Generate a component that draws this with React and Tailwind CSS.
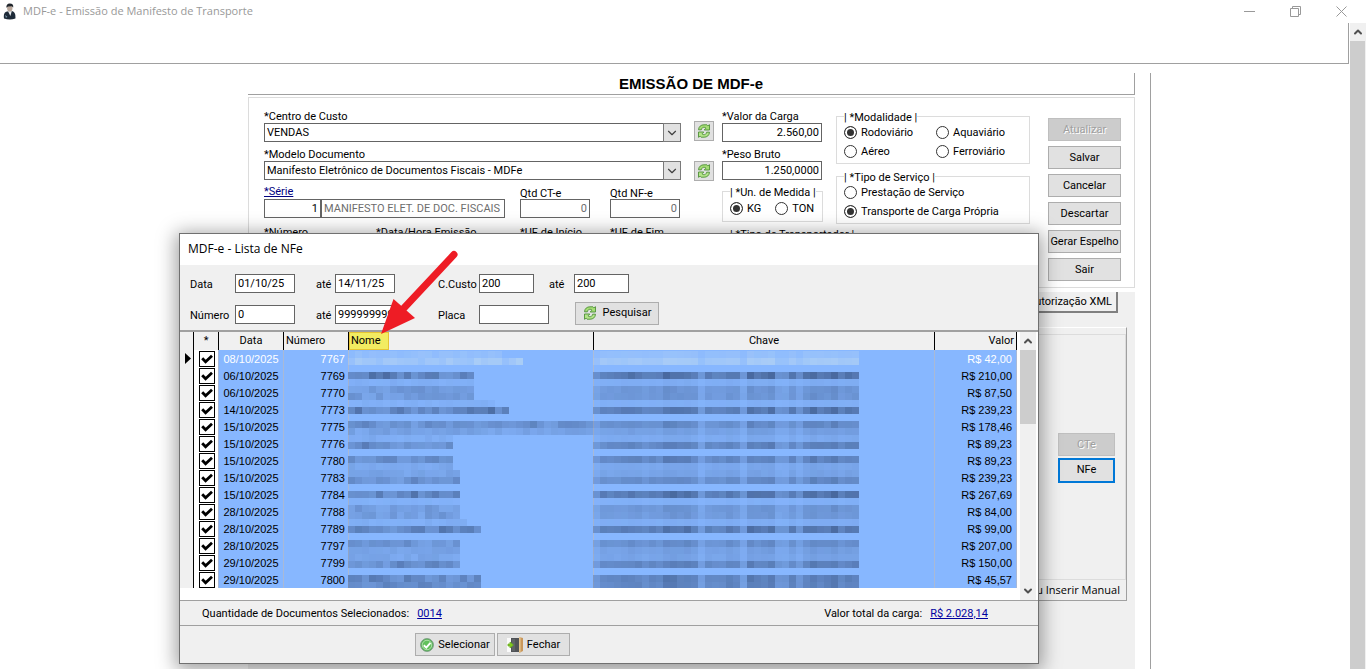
import { ChevronDown, ChevronUp } from 'lucide-react';

const NOTAS = [
  { data: '08/10/2025', numero: '7767', valor: 'R$ 42,00' },
  { data: '06/10/2025', numero: '7769', valor: 'R$ 210,00' },
  { data: '06/10/2025', numero: '7770', valor: 'R$ 87,50' },
  { data: '14/10/2025', numero: '7773', valor: 'R$ 239,23' },
  { data: '15/10/2025', numero: '7775', valor: 'R$ 178,46' },
  { data: '15/10/2025', numero: '7776', valor: 'R$ 89,23' },
  { data: '15/10/2025', numero: '7780', valor: 'R$ 89,23' },
  { data: '15/10/2025', numero: '7783', valor: 'R$ 239,23' },
  { data: '15/10/2025', numero: '7784', valor: 'R$ 267,69' },
  { data: '28/10/2025', numero: '7788', valor: 'R$ 84,00' },
  { data: '28/10/2025', numero: '7789', valor: 'R$ 99,00' },
  { data: '28/10/2025', numero: '7797', valor: 'R$ 207,00' },
  { data: '29/10/2025', numero: '7799', valor: 'R$ 150,00' },
  { data: '29/10/2025', numero: '7800', valor: 'R$ 45,57' }
];

// Mosaic that hides names and keys: strength of each 7px line, and how many
// cells the name takes on that line
const LINES = [
  [30, 22], [60, 25], [0, 0], [95, 18], [15, 18], [50, 18], [50, 18], [12, 21],
  [90, 23], [0, 0], [65, 35], [35, 35], [20, 15], [75, 15], [0, 0], [75, 15],
  [25, 15], [30, 16], [65, 16], [0, 0], [95, 16], [10, 16], [50, 16], [45, 16],
  [15, 17], [90, 19], [0, 0], [60, 16], [35, 16], [30, 16], [75, 16], [0, 0],
  [80, 19], [75, 19]
];

const KEY_CELLS = [
  60, 85, 85, 85, 90, 100, 95, 80, 90, 85, 110, 110, 100, 110, 95, 50, 85, 85, 85,
  100, 90, 50, 110, 100, 100, 110, 60, 60, 95, 60, 100, 115, 100, 100, 115, 90, 100, 100
];

const noise = (a, b) => {
  const n = Math.sin(a * 12.9898 + b * 78.233) * 43758.5453;
  return n - Math.floor(n);
};

function Mosaic({ columns }) {
  return (
    <svg
      className="absolute -left-px top-px z-10 pointer-events-none"
      width={columns * 7}
      height="237"
      shapeRendering="crispEdges"
      aria-hidden="true"
    >
      {LINES.map(([strength, nameCells], line) =>
        Array.from({ length: columns }, (_, col) => {
          const isKey = columns === 38;
          if (!isKey && col >= nameCells) return null;
          const base = isKey ? KEY_CELLS[col] : 50 + noise(col, line) * 60;
          const jitter = 0.9 + noise(line, col + 7) * 0.2;
          return (
            <rect
              key={`${line}-${col}`}
              x={col * 7}
              y={line * 7}
              width="7"
              height="7"
              fill={line < 2 ? '#c2dcf0' : '#46659a'}
              opacity={(strength * base * jitter) / 12000}
            />
          );
        })
      )}
    </svg>
  );
}

function RefreshIcon() {
  return (
    <svg width="14" height="14" viewBox="0 0 14 14" aria-hidden="true">
      <path
        d="M1.5 5.8C1.7 2.5 4 .8 6.9.8h3l1 1L12.5.7V6H7.2L9 4.2 7.8 3.4C6 3 4.6 4 4.3 5.8z"
        fill="#a4dd74"
        stroke="#4f9039"
        strokeWidth=".9"
      />
      <path
        d="M12.5 8.2C12.3 11.5 10 13.2 7.1 13.2h-3l-1-1L1.5 13.3V8h5.3L5 9.8l1.2.8C8 11 9.4 10 9.7 8.2z"
        fill="#b3e488"
        stroke="#4f9039"
        strokeWidth=".9"
      />
    </svg>
  );
}

function CheckIcon() {
  return (
    <svg width="14" height="14" viewBox="0 0 14 14" aria-hidden="true">
      <circle cx="7" cy="7" r="6.4" fill="#4cae4c" stroke="#7f9f86" />
      <circle cx="7" cy="7" r="4.8" fill="#62c15c" stroke="#b5e3ae" />
      <path d="M3.8 7.2 6.3 9.6 10.4 4.8" fill="none" stroke="#fff" strokeWidth="1.9" />
    </svg>
  );
}

function DoorIcon() {
  return (
    <svg width="16" height="16" viewBox="0 0 16 16" aria-hidden="true">
      <path d="M0 1h4v14H0z" fill="#fafafa" />
      <path d="M4 1h8v14H4z" fill="#505357" />
      <path d="M5 2h3v12H5z" fill="#5f6366" />
      <path d="M12 0l4 1v13l-4 2z" fill="#c9975b" />
      <path d="M12 0h1.6v15.2L12 16z" fill="#e5c48f" />
      <path d="M1 7h2V5l3.400 3L3 11V9H1z" fill="#82c81e" stroke="#6aad22" strokeWidth=".8" />
    </svg>
  );
}

function PersonIcon() {
  return (
    <svg width="14" height="17" viewBox="0 0 14 17" aria-hidden="true">
      <path d="M1 15.5Q0 9.5 4 8.5L9 8q4 1 3.4 7.5Q7 17.5 1 15.5z" fill="#1d2a38" />
      <path d="M5 8.2 7.4 13 8.8 8z" fill="#e9edf0" />
      <ellipse cx="6.8" cy="5" rx="2.7" ry="3.6" fill="#b9a79b" />
      <path d="M3.4 4.8Q3 .6 6.8.4q4 0 3.4 4.2L8.8 3.2 5 3.4z" fill="#20262c" />
      <path d="m2 12 2.4 1.4L3 15z" fill="#7690a3" />
    </svg>
  );
}

function Combo({ id, label, value }) {
  return (
    <div className="mb-1">
      <label htmlFor={id} className="block h-[15px] leading-[17px]">{label}</label>
      <div className="relative">
        <select
          id={id}
          className="block w-full h-[19px] appearance-none border border-[#646464] bg-white pl-0.5 leading-[17px]"
        >
          <option>{value}</option>
        </select>
        <span className="absolute right-0 top-0 flex h-[19px] w-[18px] items-center justify-center border border-[#7a7a7a] bg-[#e1e1e1] pointer-events-none">
          <ChevronDown size={14} strokeWidth={2} className="text-[#404040]" />
        </span>
      </div>
    </div>
  );
}

function Amount({ id, label, value }) {
  return (
    <div className="mb-1">
      <label htmlFor={id} className="block h-[15px] leading-[17px]">{label}</label>
      <input
        id={id}
        defaultValue={value}
        className="block h-[19px] w-[100px] border border-[#646464] bg-white px-0.5 text-right"
      />
    </div>
  );
}

function Count({ id, label }) {
  return (
    <div className="w-[70px]">
      <label htmlFor={id} className="block h-[15px] leading-[19px]">{label}</label>
      <input
        id={id}
        defaultValue="0"
        readOnly
        className="block h-[19px] w-full border border-[#646464] bg-white px-0.5 text-right text-[#6d6d6d]"
      />
    </div>
  );
}

function Radio({ name, label, checked }) {
  return (
    <label className="flex h-[19px] items-center gap-1 whitespace-nowrap">
      <input
        type="radio"
        name={name}
        defaultChecked={checked}
        className="size-[13px] shrink-0 appearance-none rounded-full border border-[#333] bg-white checked:bg-[#333] checked:shadow-[inset_0_0_0_2px_#fff]"
      />
      <span className="pt-0.5">{label}</span>
    </label>
  );
}

function Group({ legend, className, children }) {
  return (
    <fieldset className={`min-w-0 border border-[#dcdcdc] pl-[7px] ${className}`}>
      <legend className="h-[15px] whitespace-nowrap leading-[17px]">{legend}</legend>
      {children}
    </fieldset>
  );
}

function SideButton({ children, disabled }) {
  return (
    <button
      type="button"
      disabled={disabled}
      className="h-[23px] w-full whitespace-nowrap border border-[#adadad] bg-[#e1e1e1] pt-0.5 disabled:border-[#bfbfbf] disabled:bg-[#ccc] disabled:text-[#a0a0a0] disabled:[text-shadow:1px_1px_0_#fff]"
    >
      {children}
    </button>
  );
}

function RefreshButton({ label }) {
  return (
    <button
      type="button"
      aria-label={label}
      className="flex size-5 items-center justify-center border border-[#adadad] bg-[#e1e1e1]"
    >
      <RefreshIcon />
    </button>
  );
}

function FilterInput({ label, value, labelClass, inputClass }) {
  return (
    <label className="flex items-center">
      <span className={`pt-[3px] ${labelClass}`}>{label}</span>
      <input
        defaultValue={value}
        className={`h-[19px] border border-[#646464] bg-white px-0.5 ${inputClass}`}
      />
    </label>
  );
}

function ManifestForm() {
  return (
    <section className="mt-0.5 flex border border-[#dcdcdc] pl-[15px] pr-[13px]">
      <div className="min-w-0 flex-1 pt-2.5">
        <Combo id="centro" label="*Centro de Custo" value="VENDAS" />
        <Combo
          id="modelo"
          label="*Modelo Documento"
          value="Manifesto Eletrônico de Documentos Fiscais - MDFe"
        />
        <div className="flex">
          <div className="mr-[15px] min-w-0 flex-1">
            <a href="#serie" className="block h-[15px] leading-[15px] text-[#000080] underline">*Série</a>
            <div className="flex">
              <input
                aria-label="Série"
                defaultValue="1"
                className="h-[19px] w-[57px] border border-[#646464] bg-white px-0.5 text-right"
              />
              <input
                aria-label="Descrição da série"
                readOnly
                defaultValue="MANIFESTO ELET. DE DOC. FISCAIS"
                className="h-[19px] min-w-0 flex-1 border border-[#646464] bg-white px-0.5 text-[#6d6d6d]"
              />
            </div>
          </div>
          <Count id="qtd-cte" label="Qtd CT-e" />
          <div className="w-5" />
          <Count id="qtd-nfe" label="Qtd NF-e" />
          <div className="w-px" />
        </div>
        <div className="mt-1.5 flex h-[15px] leading-[17px]">
          <span className="w-28">*Número</span>
          <span className="flex-1">*Data/Hora Emissão</span>
          <span className="w-[90px]">*UF de Início</span>
          <span className="w-[71px]">*UF de Fim</span>
        </div>
      </div>

      <div className="ml-[13px] flex flex-col gap-5 pt-[23px]">
        <RefreshButton label="Atualizar centro de custo" />
        <RefreshButton label="Atualizar modelo" />
      </div>

      <div className="ml-2 w-[101px] pt-2.5">
        <Amount id="valor-carga" label="*Valor da Carga" value="2.560,00" />
        <Amount id="peso" label="*Peso Bruto" value="1.250,0000" />
        <Group legend="| *Un. de Medida |" className="mt-[3px] h-[38px]">
          <div className="flex gap-3.5">
            <Radio name="unidade" label="KG" checked />
            <Radio name="unidade" label="TON" />
          </div>
        </Group>
        <div className="mt-1 ml-2 h-[15px] whitespace-nowrap leading-[17px]">
          | *Tipo de Transportador |
        </div>
      </div>

      <div className="ml-[13px] w-[194px] pt-[11px]">
        <Group legend="| *Modalidade |" className="h-[55px]">
          <div className="-mt-px grid grid-cols-[92px_1fr]">
            <Radio name="modalidade" label="Rodoviário" checked />
            <Radio name="modalidade" label="Aquaviário" />
            <Radio name="modalidade" label="Aéreo" />
            <Radio name="modalidade" label="Ferroviário" />
          </div>
        </Group>
        <Group legend="| *Tipo de Serviço |" className="mt-[5px] h-[55px]">
          <div className="-mt-px">
            <Radio name="servico" label="Prestação de Serviço" />
            <Radio name="servico" label="Transporte de Carga Própria" checked />
          </div>
        </Group>
      </div>

      <div className="ml-[18px] flex w-[73px] flex-col gap-[5px] pt-5 pb-1.5">
        <SideButton disabled>Atualizar</SideButton>
        <SideButton>Salvar</SideButton>
        <SideButton>Cancelar</SideButton>
        <SideButton>Descartar</SideButton>
        <SideButton>Gerar Espelho</SideButton>
        <SideButton>Sair</SideButton>
      </div>
    </section>
  );
}

function DocumentsPanel() {
  return (
    <section className="mt-1 flex-1 bg-[#f0f0f0]">
      <div className="flex justify-end pr-[17px]">
        <button
          type="button"
          className="h-[21px] border-r-2 border-b-2 border-[#808080] px-1 pt-px leading-[18px]"
        >
          Autorização XML
        </button>
      </div>
      <div className="mt-3.5 mr-2 flex h-[274px] flex-col border-t border-r border-b border-t-white border-r-[#a0a0a0] border-b-[#a0a0a0] pt-1.5">
        <div className="flex flex-1 border-t border-r border-b border-[#dcdcdc]">
          <div className="mt-[52px] mb-2 flex-1 border border-black" />
          <div className="ml-5 mr-2.5 flex w-[57px] flex-col gap-0.5 pt-[98px]">
            <SideButton disabled>CTe</SideButton>
            <button type="button" className="h-[25px] border-2 border-[#0078d7] bg-[#e1e1e1]">
              NFe
            </button>
          </div>
        </div>
        <div className="h-5 pr-1.5 text-right font-['Open_Sans',sans-serif] text-[11px] leading-5">
          ou Inserir Manual
        </div>
      </div>
    </section>
  );
}

function NotasTable() {
  const head = 'h-[18px] border-r border-black p-0 font-normal leading-[18px]';
  const cell = 'h-[17px] border-r border-[#a9b9d6] p-0';
  return (
    <div className="flex h-[268px] bg-white">
      <div className="min-w-0 flex-1">
        <table className="w-full table-fixed border-separate border-spacing-0">
          <colgroup>
            <col className="w-3.5" />
            <col className="w-[25px]" />
            <col className="w-[65px]" />
            <col className="w-[65px]" />
            <col className="w-[245px]" />
            <col />
            <col className="w-[82px]" />
          </colgroup>
          <thead className="bg-[#f0f0f0]">
            <tr>
              <th className={head} aria-label="Registro atual" />
              <th className={head}>*</th>
              <th className={head}>Data</th>
              <th className={`${head} pl-0.5 text-left`}>Número</th>
              <th className={`${head} text-left`}>
                <span className="block h-[18px] w-10 border border-[#e6c433] bg-[#f2ec61] pl-px leading-4">
                  Nome
                </span>
              </th>
              <th className={head}>Chave</th>
              <th className={`${head} pr-0.5 text-right`}>Valor</th>
            </tr>
          </thead>
          <tbody className="font-['Liberation_Sans',Arial,sans-serif]">
            {NOTAS.map((nota, i) => (
              <tr key={nota.numero} className={`bg-[#87b7ff] ${i === 0 ? 'text-white' : 'text-black'}`}>
                <td className="h-[17px] border-r border-black bg-[#f0f0f0] p-0">
                  {i === 0 && (
                    <svg width="13" height="13" viewBox="0 0 13 13" aria-hidden="true">
                      <path d="M5 1v11l6-5.5z" fill="#000" />
                    </svg>
                  )}
                </td>
                <td className={`${cell} bg-white`}>
                  <div className="relative mt-px ml-[5px] size-4">
                    <input
                      type="checkbox"
                      defaultChecked
                      aria-label={`Selecionar ${nota.numero}`}
                      className="peer block size-4 appearance-none border border-black bg-white"
                    />
                    <svg
                      className="absolute inset-0 hidden pointer-events-none peer-checked:block"
                      viewBox="0 0 16 16"
                      aria-hidden="true"
                    >
                      <path d="M3.2 7.2 6.6 10.8 13 4.8" fill="none" stroke="#000" strokeWidth="2.8" />
                    </svg>
                  </div>
                </td>
                <td className={`${cell} text-center leading-4`}>{nota.data}</td>
                <td className={`${cell} pr-[3px] text-right leading-4`}>{nota.numero}</td>
                <td className={`${cell} relative`}>{i === 0 && <Mosaic columns={35} />}</td>
                <td className={`${cell} relative`}>{i === 0 && <Mosaic columns={38} />}</td>
                <td className={`${cell} pr-1 text-right leading-4`}>{nota.valor}</td>
              </tr>
            ))}
          </tbody>
        </table>
      </div>
      <div className="mr-0.5 ml-[3px] flex w-4 flex-col bg-[#f0f0f0]">
        <span className="flex h-[18px] items-center justify-center">
          <ChevronUp size={12} strokeWidth={4} className="text-[#505050]" />
        </span>
        <span className="h-[74px] bg-[#cdcdcd]" />
        <span className="flex-1" />
        <span className="flex h-[18px] items-center justify-center">
          <ChevronDown size={12} strokeWidth={4} className="text-[#505050]" />
        </span>
      </div>
    </div>
  );
}

function NfeDialog() {
  return (
    <div
      role="dialog"
      aria-label="MDF-e - Lista de NFe"
      className="absolute top-[233px] right-[327px] left-[179px] z-20 border border-[#707070] bg-[#f0f0f0] shadow-[0_3px_18px_3px_rgba(0,0,0,0.38)]"
    >
      <h2 className="h-[31px] bg-white pl-2 font-['Open_Sans',sans-serif] text-[12px] leading-[30px]">
        MDF-e - Lista de NFe
      </h2>

      <div className="h-[67px] border-b-2 border-[#a0a0a0] pt-[9px] pl-2.5">
        <div className="flex">
          <FilterInput label="Data" value="01/10/25" labelClass="w-[45px]" inputClass="w-[60px]" />
          <FilterInput label="até" value="14/11/25" labelClass="w-10 pl-[21px]" inputClass="w-[60px]" />
          <FilterInput label="C.Custo" value="200" labelClass="w-[84px] pl-[43px]" inputClass="w-[55px]" />
          <FilterInput label="até" value="200" labelClass="w-10 pl-[15px]" inputClass="w-[55px]" />
        </div>
        <div className="mt-2 flex items-end">
          <FilterInput label="Número" value="0" labelClass="w-[45px]" inputClass="w-[60px]" />
          <FilterInput label="até" value="999999999" labelClass="w-10 pl-[21px]" inputClass="w-[60px]" />
          <FilterInput label="Placa" value="" labelClass="w-[84px] pl-[43px]" inputClass="w-[70px]" />
          <button
            type="button"
            className="ml-[26px] flex h-[23px] w-[84px] items-center justify-center gap-1.5 border border-[#adadad] bg-[#e1e1e1]"
          >
            <RefreshIcon />
            Pesquisar
          </button>
        </div>
      </div>

      <NotasTable />

      <div className="flex h-[26px] items-center border-y border-[#a0a0a0] pt-0.5 pr-[50px] pl-[22px]">
        <span>Quantidade de Documentos Selecionados:</span>
        <a href="#selecionados" className="ml-2 text-[#0000a0] underline">0014</a>
        <span className="ml-auto">Valor total da carga:</span>
        <a href="#total" className="ml-2 text-[#0000a0] underline">R$ 2.028,14</a>
      </div>

      <div className="flex gap-0.5 py-[7px] pl-[235px]">
        <button
          type="button"
          className="flex h-[23px] w-20 items-center justify-center gap-1 border border-[#adadad] bg-[#e1e1e1]"
        >
          <CheckIcon />
          <span className="pt-0.5">Selecionar</span>
        </button>
        <button
          type="button"
          className="flex h-[23px] w-[73px] items-center justify-center gap-1 border border-[#adadad] bg-[#e1e1e1]"
        >
          <DoorIcon />
          <span className="pt-0.5">Fechar</span>
        </button>
      </div>

      {/* Arrow pointing at the Nome column */}
      <svg
        className="absolute top-4 left-[198px] pointer-events-none"
        width="84"
        height="86"
        viewBox="0 0 84 86"
        aria-hidden="true"
      >
        <path d="M76 4.5 26 58" stroke="#ee1c25" strokeWidth="7" strokeLinecap="round" />
        <path d="M3 84 15.5 49 37 68z" fill="#ee1c25" />
      </svg>
    </div>
  );
}

export default function App() {
  return (
    <div className="relative flex h-screen flex-col overflow-hidden bg-white font-[Roboto,sans-serif] text-[11px] text-black">
      <header className="flex h-[23px] shrink-0 items-center pl-[3px] font-['Open_Sans',sans-serif] text-[11px] text-[#999]">
        <PersonIcon />
        <span className="ml-1.5">MDF-e - Emissão de Manifesto de Transporte</span>
        <div className="mr-0.5 ml-auto flex">
          <button type="button" aria-label="Minimizar" className="flex w-[46px] justify-center">
            <svg width="11" height="11" viewBox="0 0 11 11"><path d="M0 5.5h11" stroke="#999" /></svg>
          </button>
          <button type="button" aria-label="Restaurar" className="flex w-[46px] justify-center">
            <svg width="11" height="11" viewBox="0 0 11 11">
              <path d="M.5 2.5h8v8h-8zM2.5 2.5v-2h8v8h-2" fill="none" stroke="#999" />
            </svg>
          </button>
          <button type="button" aria-label="Fechar janela" className="flex w-[46px] justify-center">
            <svg width="11" height="11" viewBox="0 0 11 11"><path d="m.5.5 10 10m0-10-10 10" stroke="#999" /></svg>
          </button>
        </div>
      </header>

      <div className="flex min-h-0 flex-1">
        <main className="flex min-w-0 flex-1 flex-col">
          <div className="h-[41px] shrink-0 border-r border-b border-[#a0a0a0]" />
          <div className="mt-[9px] mr-[198px] ml-62 flex flex-1 flex-col border-r border-[#a0a0a0] pr-[15px]">
            <h1 className="h-[22px] border-r border-b border-[#a0a0a0] text-center font-['Liberation_Sans',Arial,sans-serif] text-[15px] leading-[22px] font-bold">
              EMISSÃO DE MDF-e
            </h1>
            <ManifestForm />
            <DocumentsPanel />
          </div>
        </main>
        <div className="ml-px flex w-4 flex-col bg-[#f0f0f0]">
          <span className="flex h-[18px] items-center justify-center">
            <ChevronUp size={12} strokeWidth={4} className="text-[#505050]" />
          </span>
          <span className="mr-px flex-1 bg-[#cdcdcd]" />
        </div>
      </div>

      <NfeDialog />
    </div>
  );
}
